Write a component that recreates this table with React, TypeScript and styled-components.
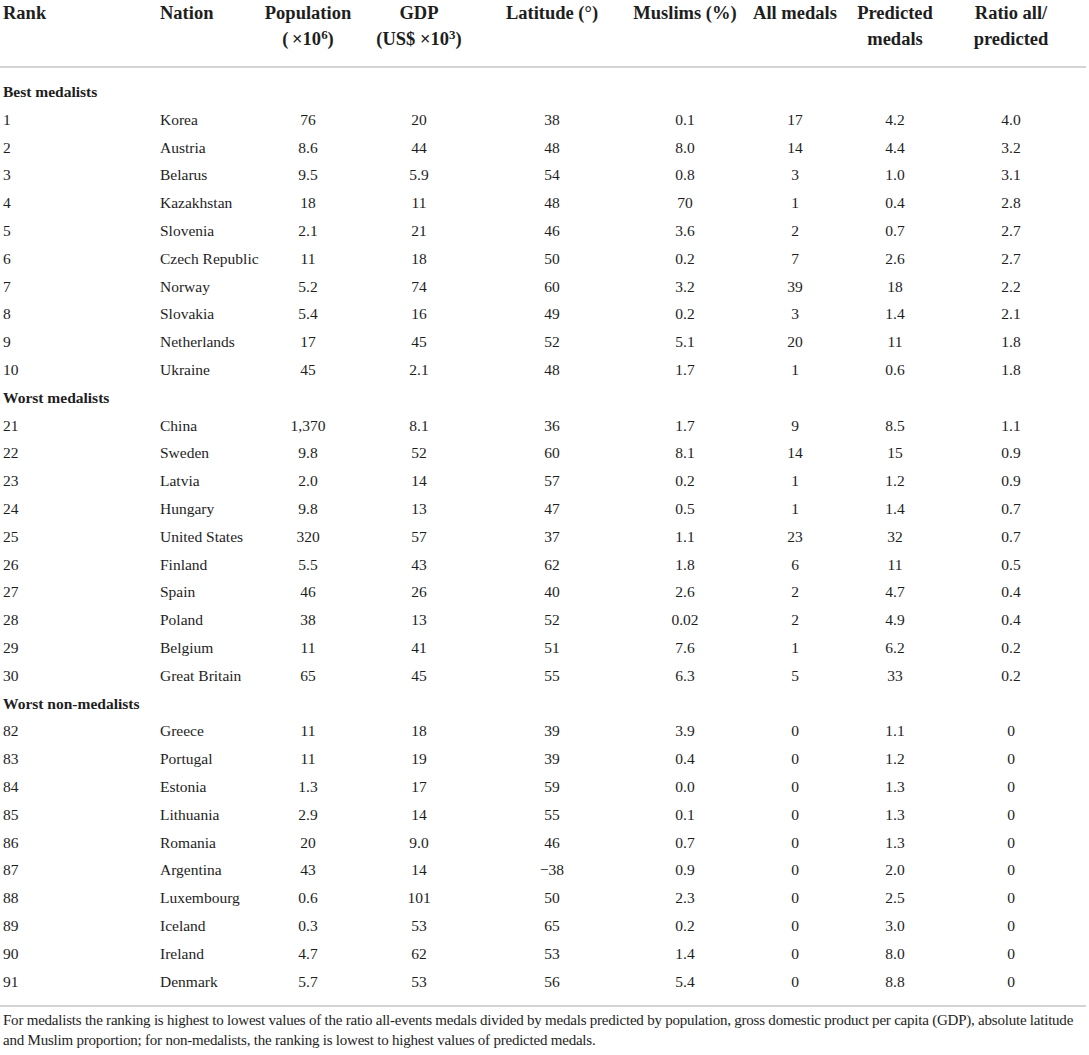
import React from "react";
import styled, { createGlobalStyle } from "styled-components";

const Global = createGlobalStyle`
  html, body { margin: 0; padding: 0; background: #ffffff; }
  body { font-family: "Liberation Serif", "Times New Roman", serif; color: #1e1e1e; }
`;

const Page = styled.div`
  width: 1086px;
`;

const Table = styled.table`
  width: 1086px;
  border-collapse: collapse;
  table-layout: fixed;
`;

const Col = styled.col<{ $w: number }>`
  width: ${(p) => p.$w}px;
`;

const HeadCell = styled.th<{ $align?: "left" | "center"; $padRight?: number }>`
  font-weight: bold;
  font-size: 18.5px;
  line-height: 26px;
  vertical-align: top;
  text-align: ${(p) => p.$align ?? "center"};
  padding: 0 ${(p) => p.$padRight ?? 0}px 14px ${(p) => (p.$align === "left" ? "3px" : "0")};
  border-bottom: 2px solid #d4d4d4;
  white-space: nowrap;
`;

const Sup = styled.sup`
  font-size: 0.7em;
  line-height: 0;
  vertical-align: 0.45em;
`;

const Row = styled.tr<{ $padTop?: boolean; $padBottom?: boolean }>`
  & > td {
    padding-top: ${(p) => (p.$padTop ? "10px" : "0")};
    padding-bottom: ${(p) => (p.$padBottom ? "10px" : "0")};
  }
`;

const Cell = styled.td<{ $align?: "left" | "center"; $padRight?: number }>`
  font-size: 15.5px;
  height: 27.8px;
  line-height: 27.8px;
  text-align: ${(p) => p.$align ?? "center"};
  padding-left: ${(p) => (p.$align === "left" ? "3px" : "0")};
  padding-right: ${(p) => p.$padRight ?? 0}px;
  white-space: nowrap;
  overflow: visible;
`;

const SectionCell = styled.td`
  font-size: 15.5px;
  font-weight: bold;
  height: 27.8px;
  line-height: 27.8px;
  padding-left: 3px;
  text-align: left;
`;

const LineRow = styled.tr`
  & > td {
    border-bottom: 2px solid #d4d4d4;
    padding: 0;
    height: 0;
  }
`;

const Footnote = styled.div`
  padding: 3px 0 0 3px;
  font-size: 15px;
  line-height: 20px;
  letter-spacing: -0.22px;
  color: #1e1e1e;
`;

const FootLine = styled.div`
  white-space: nowrap;
`;

type DataRow = [string, string, string, string, string, string, string, string, string];

const sections: { title: string; rows: DataRow[] }[] = [
  {
    title: "Best medalists",
    rows: [
      ["1", "Korea", "76", "20", "38", "0.1", "17", "4.2", "4.0"],
      ["2", "Austria", "8.6", "44", "48", "8.0", "14", "4.4", "3.2"],
      ["3", "Belarus", "9.5", "5.9", "54", "0.8", "3", "1.0", "3.1"],
      ["4", "Kazakhstan", "18", "11", "48", "70", "1", "0.4", "2.8"],
      ["5", "Slovenia", "2.1", "21", "46", "3.6", "2", "0.7", "2.7"],
      ["6", "Czech Republic", "11", "18", "50", "0.2", "7", "2.6", "2.7"],
      ["7", "Norway", "5.2", "74", "60", "3.2", "39", "18", "2.2"],
      ["8", "Slovakia", "5.4", "16", "49", "0.2", "3", "1.4", "2.1"],
      ["9", "Netherlands", "17", "45", "52", "5.1", "20", "11", "1.8"],
      ["10", "Ukraine", "45", "2.1", "48", "1.7", "1", "0.6", "1.8"],
    ],
  },
  {
    title: "Worst medalists",
    rows: [
      ["21", "China", "1,370", "8.1", "36", "1.7", "9", "8.5", "1.1"],
      ["22", "Sweden", "9.8", "52", "60", "8.1", "14", "15", "0.9"],
      ["23", "Latvia", "2.0", "14", "57", "0.2", "1", "1.2", "0.9"],
      ["24", "Hungary", "9.8", "13", "47", "0.5", "1", "1.4", "0.7"],
      ["25", "United States", "320", "57", "37", "1.1", "23", "32", "0.7"],
      ["26", "Finland", "5.5", "43", "62", "1.8", "6", "11", "0.5"],
      ["27", "Spain", "46", "26", "40", "2.6", "2", "4.7", "0.4"],
      ["28", "Poland", "38", "13", "52", "0.02", "2", "4.9", "0.4"],
      ["29", "Belgium", "11", "41", "51", "7.6", "1", "6.2", "0.2"],
      ["30", "Great Britain", "65", "45", "55", "6.3", "5", "33", "0.2"],
    ],
  },
  {
    title: "Worst non-medalists",
    rows: [
      ["82", "Greece", "11", "18", "39", "3.9", "0", "1.1", "0"],
      ["83", "Portugal", "11", "19", "39", "0.4", "0", "1.2", "0"],
      ["84", "Estonia", "1.3", "17", "59", "0.0", "0", "1.3", "0"],
      ["85", "Lithuania", "2.9", "14", "55", "0.1", "0", "1.3", "0"],
      ["86", "Romania", "20", "9.0", "46", "0.7", "0", "1.3", "0"],
      ["87", "Argentina", "43", "14", "\u221238", "0.9", "0", "2.0", "0"],
      ["88", "Luxembourg", "0.6", "101", "50", "2.3", "0", "2.5", "0"],
      ["89", "Iceland", "0.3", "53", "65", "0.2", "0", "3.0", "0"],
      ["90", "Ireland", "4.7", "62", "53", "1.4", "0", "8.0", "0"],
      ["91", "Denmark", "5.7", "53", "56", "5.4", "0", "8.8", "0"],
    ],
  },
];

const widths = [157, 95, 112, 110, 156, 110, 110, 90, 146];

export default function App() {
  return (
    <Page>
      <Global />
      <Table>
        <colgroup>
          {widths.map((w, i) => (
            <Col key={i} $w={w} />
          ))}
        </colgroup>
        <thead>
          <tr>
            <HeadCell $align="left">Rank</HeadCell>
            <HeadCell $align="left">Nation</HeadCell>
            <HeadCell>
              Population
              <br />
              {"(\u2009\u00d710"}
              <Sup>6</Sup>
              {")"}
            </HeadCell>
            <HeadCell>
              GDP
              <br />
              {"(US$ \u00d710"}
              <Sup>3</Sup>
              {")"}
            </HeadCell>
            <HeadCell>Latitude (°)</HeadCell>
            <HeadCell>Muslims (%)</HeadCell>
            <HeadCell>All medals</HeadCell>
            <HeadCell>
              Predicted
              <br />
              medals
            </HeadCell>
            <HeadCell $padRight={4}>
              Ratio all/
              <br />
              predicted
            </HeadCell>
          </tr>
        </thead>
        <tbody>
          {sections.map((s, si) => (
            <React.Fragment key={s.title}>
              <Row $padTop={si === 0}>
                <SectionCell colSpan={9}>{s.title}</SectionCell>
              </Row>
              {s.rows.map((r, ri) => (
                <Row
                  key={r[0]}
                  $padBottom={si === sections.length - 1 && ri === s.rows.length - 1}
                >
                  {r.map((v, ci) => (
                    <Cell
                      key={ci}
                      $align={ci < 2 ? "left" : "center"}
                      $padRight={ci === 8 ? 4 : 0}
                    >
                      {v}
                    </Cell>
                  ))}
                </Row>
              ))}
            </React.Fragment>
          ))}
          <LineRow>
            <td colSpan={9} />
          </LineRow>
        </tbody>
      </Table>
      <Footnote>
        <FootLine>
          For medalists the ranking is highest to lowest values of the ratio all-events medals divided by medals
          predicted by population, gross domestic product per capita (GDP), absolute latitude
        </FootLine>
        <FootLine>
          and Muslim proportion; for non-medalists, the ranking is lowest to highest values of predicted medals.
        </FootLine>
      </Footnote>
    </Page>
  );
}
